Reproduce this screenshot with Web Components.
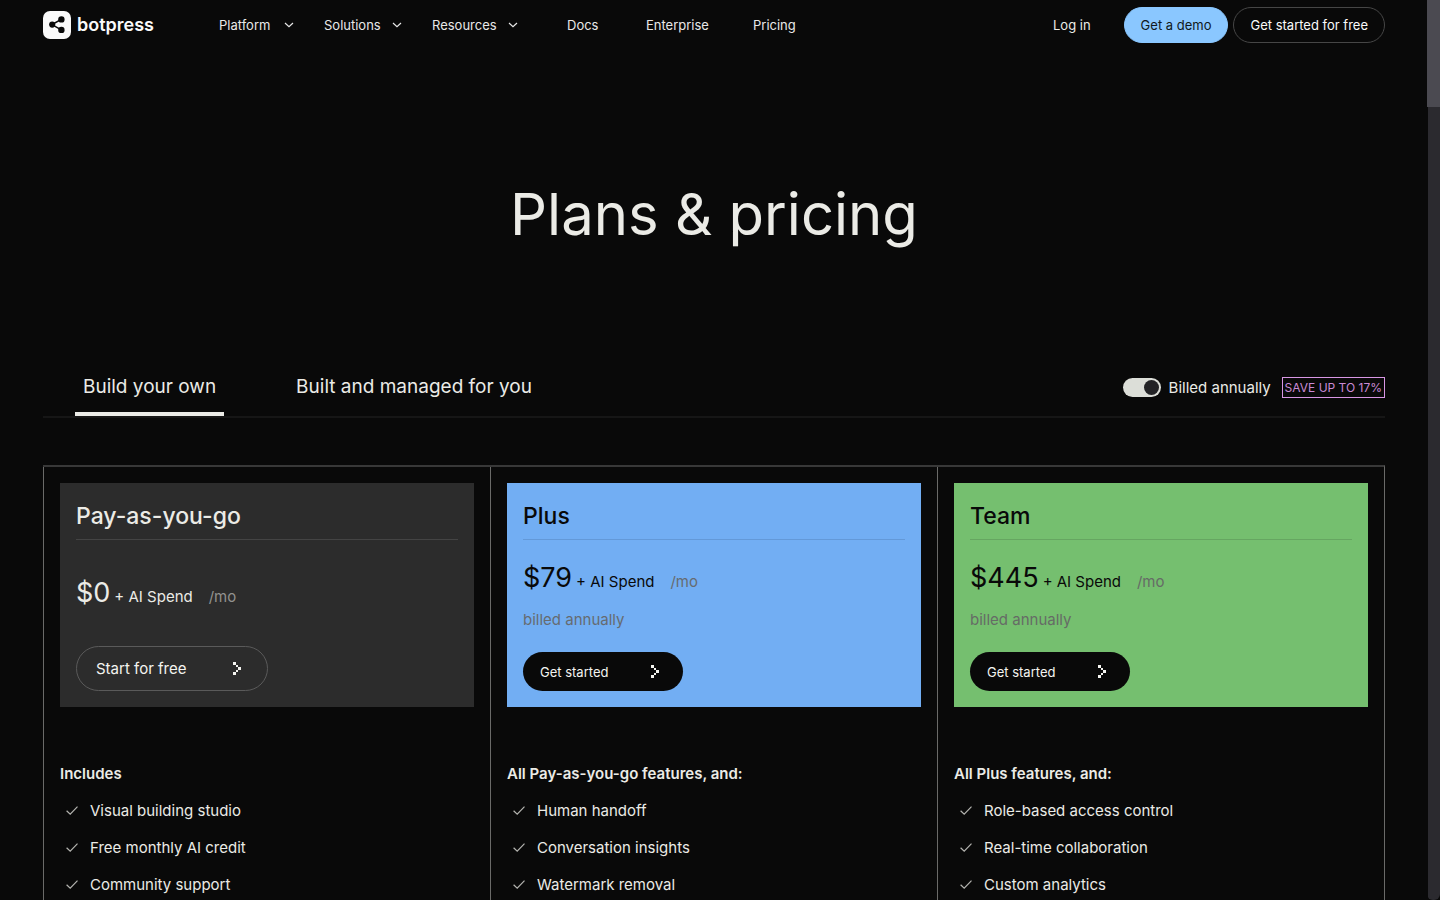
<!DOCTYPE html>
<html lang="en">
<head>
<meta charset="utf-8">
<meta name="viewport" content="width=device-width, initial-scale=1">
<title>Plans &amp; pricing</title>
<style>
  html, body { margin: 0; height: 100%; background: #090909; }
  body { font-family: Inter, "Liberation Sans", sans-serif; font-size: 15px; line-height: 24px; color: #ebebe6; overflow: hidden; }
</style>
</head>
<body>
<app-shell>
  <site-header slot="header"></site-header>
  <page-hero>Plans &amp; pricing</page-hero>
  <plan-tabs></plan-tabs>
  <plan-grid>
    <plan-card name="Pay-as-you-go" price="$0" cta="Start for free" heading="Includes" variant="outline">
      <feature-item>Visual building studio</feature-item>
      <feature-item>Free monthly AI credit</feature-item>
      <feature-item>Community support</feature-item>
    </plan-card>
    <plan-card name="Plus" price="$79" note="billed annually" cta="Get started" heading="All Pay-as-you-go features, and:" variant="blue">
      <feature-item>Human handoff</feature-item>
      <feature-item>Conversation insights</feature-item>
      <feature-item>Watermark removal</feature-item>
    </plan-card>
    <plan-card name="Team" price="$445" note="billed annually" cta="Get started" heading="All Plus features, and:" variant="green">
      <feature-item>Role-based access control</feature-item>
      <feature-item>Real-time collaboration</feature-item>
      <feature-item>Custom analytics</feature-item>
    </plan-card>
  </plan-grid>
</app-shell>

<script>
const define = (name, html, setup) => {
  const tpl = document.createElement('template');
  tpl.innerHTML = html;
  customElements.define(name, class extends HTMLElement {
    constructor() {
      super();
      this.attachShadow({ mode: 'open' }).append(tpl.content.cloneNode(true));
    }
    connectedCallback() { if (setup) setup(this, this.shadowRoot); }
  });
};

define('app-shell', `
  <style>
    :host { display: grid; grid-template-columns: minmax(0, 1fr) 13px; height: 100vh; }
    .view { display: flex; flex-direction: column; overflow: auto; scrollbar-width: none; padding: 0 42px 0 43px; }
    main { flex: 1; display: flex; flex-direction: column; }
    .track { background: linear-gradient(to right, #090909 1px, #2b2a2f 1px); border-radius: 0 0 6px 6px; }
    .thumb { height: 107px; background: #4b4a51; }
  </style>
  <div class="view"><slot name="header"></slot><main><slot></slot></main></div>
  <div class="track" aria-hidden="true"><div class="thumb"></div></div>`);

define('brand-logo', `
  <style>
    :host { display: block; }
    a { display: flex; align-items: center; gap: 6px; color: #fafafa; text-decoration: none; font-size: 18px; line-height: 28px; font-weight: 600; }
    svg { display: block; }
  </style>
  <a href="#">
    <svg width="28" height="28" viewBox="0 0 28 28" aria-hidden="true">
      <rect width="28" height="28" rx="7" fill="#fafafa"/>
      <path d="M18.3 8.4 9 13.6 18.3 18.9" fill="none" stroke="#090909" stroke-width="1.6"/>
      <circle cx="18.4" cy="8.4" r="3.2" fill="#090909"/>
      <circle cx="9.2" cy="13.6" r="3.1" fill="#090909"/>
      <circle cx="18.4" cy="18.9" r="3.2" fill="#090909"/>
    </svg>
    <span>botpress</span>
  </a>`);

define('nav-item', `
  <style>
    :host { display: block; }
    a { display: flex; align-items: center; gap: 11px; color: #e8e8e8; text-decoration: none; white-space: nowrap; }
    svg { display: none; }
    :host([menu]) a { display: inline-flex; justify-content: space-between; min-width: 75px; }
    :host([menu]) svg { display: block; }
  </style>
  <a href="#"><slot></slot>
    <svg width="10" height="6" viewBox="0 0 10 6" fill="none" stroke="#e8e8e8" stroke-width="1.2" aria-hidden="true"><path d="M1 1 5 4.6 9 1"/></svg>
  </a>`);

define('site-header', `
  <style>
    :host { display: flex; align-items: center; height: 50px; flex: none; font-size: 13px; line-height: 20px; }
    brand-logo { width: 176px; }
    nav { display: grid; grid-template-columns: 105px 108px 135px 79px 107px auto; align-items: center; }
    .actions { display: flex; align-items: center; gap: 5px; margin-left: auto; }
    a { color: #ebebe6; text-decoration: none; margin-right: 28px; }
    button { height: 36px; padding: 0 16px; border-radius: 18px; border: 1px solid #464646; background: none; color: #fafafa; font: inherit; white-space: nowrap; }
    .demo { background: #8ac7ff; border-color: #8ac7ff; color: #101820; }
  </style>
  <brand-logo></brand-logo>
  <nav aria-label="Main">
    <nav-item menu>Platform</nav-item>
    <nav-item menu>Solutions</nav-item>
    <nav-item menu>Resources</nav-item>
    <nav-item>Docs</nav-item>
    <nav-item>Enterprise</nav-item>
    <nav-item>Pricing</nav-item>
  </nav>
  <div class="actions">
    <a href="#">Log in</a>
    <button type="button" class="demo">Get a demo</button>
    <button type="button">Get started for free</button>
  </div>`);

define('page-hero', `
  <style>
    :host { display: block; padding: 128px 0 125px; text-align: center; }
    h1 { margin: 0; font-size: 58px; line-height: 72px; font-weight: 400; }
  </style>
  <h1><slot></slot></h1>`);

define('plan-tabs', `
  <style>
    :host { display: flex; justify-content: space-between; align-items: flex-start; border-bottom: 2px solid #161616; margin-bottom: 47px; }
    .tabs { display: flex; gap: 64px; margin-left: 32px; }
    .tabs button { font: inherit; font-size: 19px; line-height: 24px; color: inherit; background: none; border: 0; border-bottom: 4px solid transparent; padding: 0 8px 13px; white-space: nowrap; }
    .tabs button[aria-selected=true] { border-bottom-color: #ebebe6; }
    .billing { display: flex; align-items: center; gap: 8px; height: 25px; white-space: nowrap; }
    label { display: flex; align-items: center; gap: 8px; min-width: 151px; }
    input { appearance: none; display: flex; justify-content: flex-end; box-sizing: border-box; width: 38px; height: 19px; margin: 0; padding: 2px; border-radius: 10px; background: #dcded8; }
    input::before { content: ""; width: 15px; height: 15px; border-radius: 50%; background: #232326; }
    .tag { border: 1px solid #d896e4; color: #c98ad6; font-size: 12px; line-height: 19px; padding: 0 2px; }
  </style>
  <div class="tabs" role="tablist">
    <button type="button" role="tab" aria-selected="true">Build your own</button>
    <button type="button" role="tab" aria-selected="false">Built and managed for you</button>
  </div>
  <div class="billing">
    <label for="annual"><input id="annual" type="checkbox" role="switch" checked>Billed annually</label>
    <span class="tag">SAVE UP TO 17%</span>
  </div>`);

define('plan-grid', `
  <style>
    :host { flex: 1; display: grid; grid-template-columns: repeat(3, minmax(0, 1fr)); border-top: 2px solid #383838; border-right: 1px solid #6a6a68; }
  </style>
  <slot></slot>`);

define('feature-item', `
  <style>
    :host { display: flex; align-items: center; gap: 12px; padding-left: 6px; }
    svg { flex: none; }
  </style>
  <svg width="12" height="10" viewBox="0 0 12 10" fill="none" stroke="#b4b4b0" stroke-width="1.2" aria-hidden="true"><path d="M.6 4.7 4.2 8.2 11.5 .6"/></svg>
  <span><slot></slot></span>`);

define('plan-card', `
  <style>
    :host { display: block; border-left: 1px solid #6a6a68; padding: 16px; --bg: #2c2c2c; --fg: #ebebe6; --muted: #92928f; --rule: #444; }
    :host([variant=blue]) { --bg: #72aef3; --fg: #090909; --muted: #666b70; --rule: #6399d8; }
    :host([variant=green]) { --bg: #75bf6f; --fg: #090909; --muted: #666b66; --rule: #66a661; }
    .card { display: flex; flex-direction: column; align-items: flex-start; box-sizing: border-box; min-height: 224px; padding: 17px 16px 16px; background: var(--bg); color: var(--fg); }
    h2 { align-self: stretch; margin: 0; padding-bottom: 7px; border-bottom: 1px solid var(--rule); font-size: 23px; line-height: 32px; font-weight: 500; }
    .offer { flex: 1; display: flex; flex-direction: column; justify-content: center; gap: 12px; }
    .price { display: flex; align-items: baseline; gap: 4px; white-space: nowrap; }
    .amount { font-size: 27px; line-height: 36px; }
    .per { margin-left: 12px; }
    .per, .note { color: var(--muted); }
    .note:empty { display: none; }
    button { display: flex; align-items: center; justify-content: space-between; box-sizing: border-box; width: 160px; height: 39px; padding: 0 24px 0 17px; border: 0; border-radius: 20px; background: #090909; color: #f4f4f0; font: inherit; font-size: 13px; }
    :host([variant=outline]) button { width: 192px; height: 45px; padding: 0 26px 0 19px; border: 1px solid #5a5a5a; border-radius: 23px; background: none; font-size: 15px; }
    h3 { margin: 55px 0 13px; font-size: 15px; line-height: 24px; font-weight: 600; }
    .features { display: grid; gap: 13px; }
  </style>
  <section class="card">
    <h2></h2>
    <div class="offer">
      <div class="price"><span class="amount"></span><span>+ AI Spend</span><span class="per">/mo</span></div>
      <div class="note"></div>
    </div>
    <button type="button"><span class="cta"></span>
      <svg width="8" height="13" viewBox="0 0 8 13" fill="currentColor" aria-hidden="true" shape-rendering="crispEdges"><path d="M0 0h3v3H0zM3 3h2v2H3zM5 5h3v3H5zM3 8h2v2H3zM0 10h3v3H0z"/></svg>
    </button>
  </section>
  <h3></h3>
  <div class="features"><slot></slot></div>`,
  (el, root) => {
    const put = (sel, attr) => { root.querySelector(sel).textContent = el.getAttribute(attr) || ''; };
    put('h2', 'name'); put('.amount', 'price'); put('.note', 'note'); put('.cta', 'cta'); put('h3', 'heading');
  });
</script>
</body>
</html>
